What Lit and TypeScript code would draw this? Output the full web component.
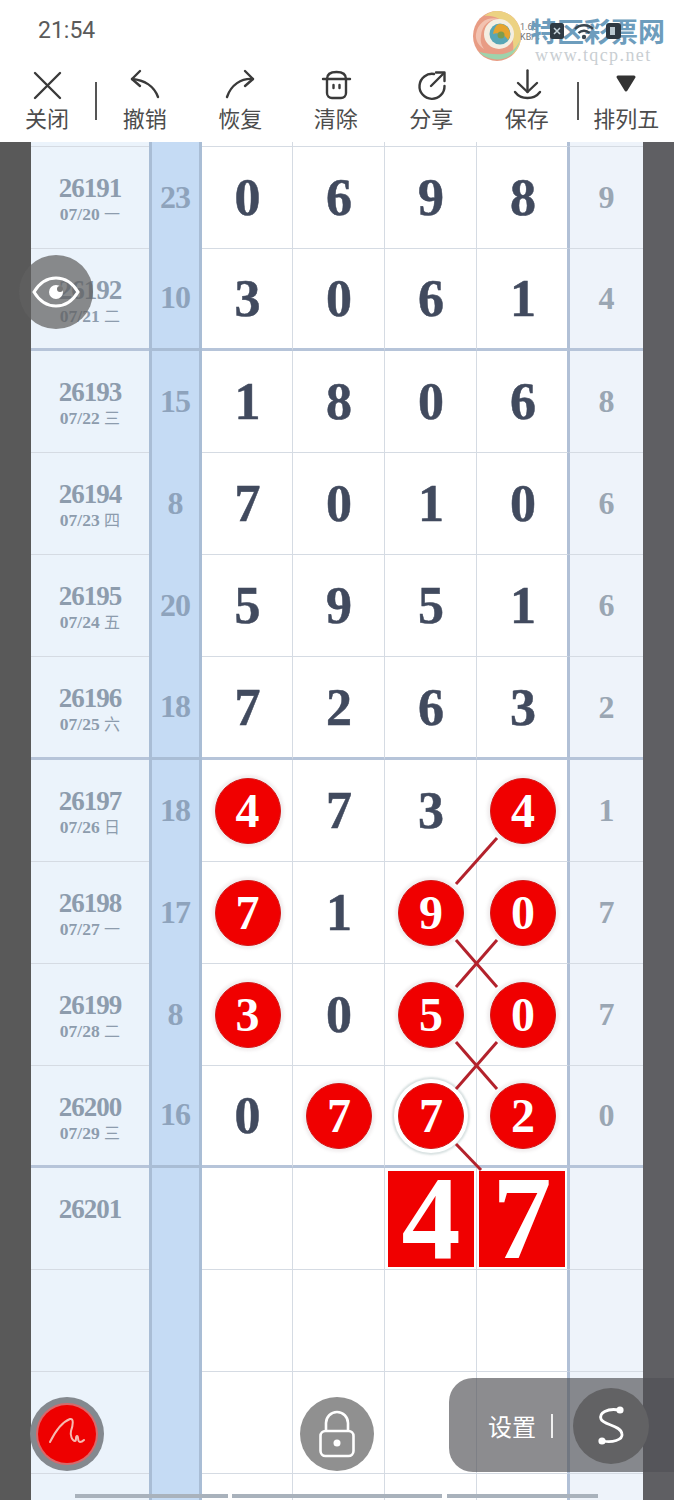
import { LitElement, html, css, svg } from "lit";
import { customElement } from "lit/decorators.js";

type Row = {
  no: string;
  date?: string;
  sum?: string;
  nums?: string[];
  hit?: number[];
  right?: string;
  thick?: boolean;
  tall?: boolean;
};

const rows: Row[] = [
  { no: "26191", date: "07/20 一", sum: "23", nums: ["0", "6", "9", "8"], right: "9" },
  { no: "26192", date: "07/21 二", sum: "10", nums: ["3", "0", "6", "1"], right: "4", thick: true },
  { no: "26193", date: "07/22 三", sum: "15", nums: ["1", "8", "0", "6"], right: "8" },
  { no: "26194", date: "07/23 四", sum: "8", nums: ["7", "0", "1", "0"], right: "6" },
  { no: "26195", date: "07/24 五", sum: "20", nums: ["5", "9", "5", "1"], right: "6" },
  { no: "26196", date: "07/25 六", sum: "18", nums: ["7", "2", "6", "3"], right: "2", thick: true, tall: true },
  { no: "26197", date: "07/26 日", sum: "18", nums: ["4", "7", "3", "4"], hit: [0, 3], right: "1" },
  { no: "26198", date: "07/27 一", sum: "17", nums: ["7", "1", "9", "0"], hit: [0, 2, 3], right: "7" },
  { no: "26199", date: "07/28 二", sum: "8", nums: ["3", "0", "5", "0"], hit: [0, 2, 3], right: "7" },
  { no: "26200", date: "07/29 三", sum: "16", nums: ["0", "7", "7", "2"], hit: [1, 2, 3], right: "0", thick: true },
];

const tools = [
  { label: "撤销", icon: svg`<path d="M11 2 3 10l8 7"/><path d="M3 10c12 1 22 7 26 18"/>` },
  { label: "恢复", icon: svg`<path d="M21 2l8 8-8 7"/><path d="M29 10C17 9 7 16 3 28"/>` },
  {
    label: "清除",
    icon: svg`<path d="M7 10v14a5 5 0 0 0 5 5h9a5 5 0 0 0 5-5V10"/><path d="M3 10h27"/><path d="M7 10C7 5 11 3 16.500 3S26 5 26 10"/><path d="M13.500 16v3M19.500 16v3"/>`,
  },
  { label: "分享", icon: svg`<path d="M19 5A12.500 12.500 0 1 0 29.500 17"/><path d="M16 17 29 4"/><path d="M21 3.500h8.500V12"/>` },
  { label: "保存", icon: svg`<path d="M16.500 1.500V23"/><path d="M7 14l9.500 9 9.500-9"/><path d="M4 23c3 4 8 6 12.500 6s9.500-2 12.500-6"/>` },
];

@customElement("app-root")
export class AppRoot extends LitElement {
  static styles = css`
    :host {
      display: block;
      position: relative;
      width: 674px;
      height: 1500px;
      overflow: hidden;
      background: #fff;
      font-family: "Noto Sans CJK SC", "Noto Sans", sans-serif;
    }

    .status {
      height: 62px;
      box-sizing: border-box;
      padding: 17px 0 0 38px;
      font-family: Roboto, sans-serif;
      font-size: 23px;
      line-height: 27px;
      color: #5a5a5a;
    }

    .toolbar {
      height: 80px;
      display: grid;
      grid-template-columns: 94px 3px repeat(5, 95.500px) 4px 1fr;
    }
    .tool {
      display: flex;
      flex-direction: column;
      align-items: center;
      padding-top: 7px;
      font-size: 22px;
      line-height: 30px;
      color: #4c4c4c;
    }
    .tool svg {
      width: 32px;
      height: 32px;
      fill: none;
      stroke: #3a3a3a;
      stroke-width: 2.400;
      stroke-linecap: round;
      stroke-linejoin: round;
      margin-bottom: 1px;
    }
    .tool svg.tri {
      fill: #333;
      stroke: #333;
      stroke-width: 3;
    }
    .divider {
      justify-self: end;
      width: 2px;
      height: 38px;
      margin-top: 20px;
      background: #555;
    }

    .sheet {
      position: relative;
      height: 1358px;
      padding: 0 31px;
      background: linear-gradient(90deg, #595959 31px, transparent 31px, transparent 643px, #5f5f63 643px);
      background-color: #fff;
    }
    .row {
      display: grid;
      grid-template-columns: 118px 53px 91px 92px 92px 92px 74px;
      height: 102px;
    }
    .row.tall {
      height: 103px;
    }
    .row.head {
      height: 5px;
    }
    .cell {
      display: flex;
      align-items: center;
      justify-content: center;
      box-sizing: border-box;
      min-width: 0;
      border-bottom: 1px solid #d5dbe3;
      border-right: 1px solid #d5dbe3;
      font-family: "Liberation Serif", serif;
      font-weight: 700;
    }
    .thick .cell {
      border-bottom: 3px solid #b6c4d9;
    }

    .date {
      flex-direction: column;
      justify-content: flex-start;
      padding-top: 26px;
      background: #ebf3fb;
      border-right: none;
      color: #8d9cad;
    }
    .date b {
      font-size: 27px;
      line-height: 30px;
      letter-spacing: -1px;
    }
    .date span {
      font-size: 17.500px;
      line-height: 20px;
    }
    .date span i {
      font-family: "Noto Sans CJK SC", sans-serif;
      font-style: normal;
      font-weight: 400;
      font-size: 16px;
    }

    .sum {
      background: #c5dbf4;
      border-left: 3px solid #a9bdd5;
      border-right: 3px solid #a9bdd5;
      border-bottom: none;
      padding: 0 1px 2px 0;
      font-size: 32px;
      letter-spacing: -1px;
      color: #8ea3bc;
    }
    .thick .sum {
      border-bottom: 3px solid #a9bdd5;
    }

    .num {
      padding-left: 1px;
      font-size: 52px;
      -webkit-text-stroke: 0.500px #414a5e;
      color: #414a5e;
    }
    .num.last {
      padding-left: 2px;
      border-right: 2px solid #b1c0d6;
    }
    .ball {
      display: flex;
      align-items: center;
      justify-content: center;
      width: 66px;
      height: 66px;
      box-sizing: border-box;
      border-radius: 50%;
      background: #f00000;
      border: 1px solid #d21a1a;
      box-shadow: 0 0 3px 3px rgba(232, 226, 228, 0.6);
      font-size: 48px;
      -webkit-text-stroke: 0;
      color: #fff;
    }
    .ball.ring {
      box-shadow: 0 0 0 4px #fff, 0 0 2px 6px rgba(190, 205, 205, 0.6);
    }
    .hit-box {
      display: flex;
      align-items: center;
      justify-content: center;
      width: 86px;
      height: 96px;
      background: #f00000;
      font-size: 118px;
      line-height: 96px;
      -webkit-text-stroke: 0;
      color: #fff;
    }
    .last .hit-box {
      margin-left: -2px;
    }

    .side {
      background: #eef3fa;
      border-left: 1px solid #b1c0d6;
      border-right: none;
      font-size: 32px;
      color: #9aa6b3;
    }

    .links {
      position: absolute;
      left: 0;
      top: 0;
      pointer-events: none;
    }
    .links line {
      stroke: #b3222c;
      stroke-width: 3;
    }

    .scroll {
      position: absolute;
      top: 1494px;
      height: 4px;
      background: #a9b2bc;
    }

    .logo {
      position: absolute;
      left: 470px;
      top: 8px;
      width: 204px;
      height: 56px;
    }
    .logo svg {
      position: absolute;
      left: 2px;
      top: 2px;
    }
    .logo .cn {
      position: absolute;
      left: 60px;
      top: 9px;
      font-size: 27px;
      line-height: 27px;
      font-weight: 700;
      color: #6d9dbd;
      white-space: nowrap;
    }
    .logo .url {
      position: absolute;
      left: 65px;
      top: 37px;
      font-family: "Liberation Serif", serif;
      font-size: 18px;
      line-height: 20px;
      letter-spacing: 1.400px;
      color: #c9ced2;
      white-space: nowrap;
    }
    .logo .speed {
      position: absolute;
      left: 50px;
      top: 14px;
      font-family: Roboto, sans-serif;
      font-size: 9px;
      line-height: 10px;
      color: #777;
    }
    .sys {
      position: absolute;
      left: 548px;
      top: 20px;
    }

    .round {
      position: absolute;
      display: flex;
      align-items: center;
      justify-content: center;
      width: 74px;
      height: 74px;
      border-radius: 50%;
    }
    .eye {
      left: 19px;
      top: 255px;
      background: rgba(95, 95, 95, 0.72);
    }
    .pen {
      left: 30px;
      top: 1397px;
      background: #84898f;
    }
    .pen-in {
      display: flex;
      align-items: center;
      justify-content: center;
      width: 58px;
      height: 58px;
      border-radius: 50%;
      background: #ee0000;
      box-shadow: 0 0 0 2px #d9686a;
    }
    .lock {
      left: 300px;
      top: 1397px;
      background: #909090;
    }
    .panel {
      position: absolute;
      left: 449px;
      top: 1378px;
      width: 225px;
      height: 94px;
      box-sizing: border-box;
      padding-left: 39px;
      display: flex;
      align-items: center;
      gap: 15px;
      border-radius: 24px 0 0 24px;
      background: rgba(80, 80, 85, 0.66);
      font-size: 24px;
      color: #fff;
    }
    .panel i {
      width: 2px;
      height: 24px;
      background: #f0f0f0;
      margin-top: 1px;
    }
    .share {
      left: 573px;
      top: 1388px;
      width: 76px;
      height: 76px;
      background: #626264;
    }
  `;

  private renderNum(row: Row, i: number, n: string) {
    const hit = row.hit?.includes(i);
    // the 7 in 26200 third column has the heavier ring
    const ring = row.no === "26200" && i === 2;
    return html`<div class="cell num ${i === 3 ? "last" : ""}">
      ${hit ? html`<div class="ball ${ring ? "ring" : ""}">${n}</div>` : n}
    </div>`;
  }

  private renderRow(row: Row) {
    const [day, week] = (row.date ?? "").split(" ");
    return html`<div class="row ${row.thick ? "thick" : ""} ${row.tall ? "tall" : ""}">
      <div class="cell date">
        <b>${row.no}</b>
        ${row.date ? html`<span>${day} <i>${week}</i></span>` : ""}
      </div>
      <div class="cell sum">${row.sum}</div>
      ${row.nums?.map((n, i) => this.renderNum(row, i, n))}
      <div class="cell side">${row.right}</div>
    </div>`;
  }

  private renderEmptyRow(no: string, boxes: string[] = []) {
    return html`<div class="row">
      <div class="cell date"><b>${no}</b></div>
      <div class="cell sum"></div>
      <div class="cell num"></div>
      <div class="cell num"></div>
      <div class="cell num">${boxes[0] ? html`<div class="hit-box">${boxes[0]}</div>` : ""}</div>
      <div class="cell num last">${boxes[1] ? html`<div class="hit-box">${boxes[1]}</div>` : ""}</div>
      <div class="cell side"></div>
    </div>`;
  }

  private renderLinks() {
    const segs = [
      [497, 838, 456, 884],
      [456, 940, 497, 987],
      [497, 940, 456, 987],
      [456, 1042, 497, 1089],
      [497, 1042, 456, 1089],
      [456, 1144, 481, 1170],
    ];
    // viewBox starts at the sheet's top, so the points above are page coordinates
    return html`<svg class="links" width="674" height="1358" viewBox="0 142 674 1358">
      ${segs.map((s) => svg`<line x1=${s[0]} y1=${s[1]} x2=${s[2]} y2=${s[3]} />`)}
    </svg>`;
  }

  private renderLogo() {
    return html`<div class="logo">
      <svg width="50" height="52" viewBox="0 0 50 52">
        <ellipse cx="25" cy="26" rx="24" ry="25" fill="#e89c84" />
        <path d="M25 1c13 0 24 11 24 25 0 8-3 14-9 19 3-8 1-22-6-30C29 9 22 5 12 6c4-3 8-5 13-5z" fill="#ecd282" />
        <path d="M7 42c6 7 22 11 32 3 5-4 8-10 9-15-3 8-9 13-17 14-9 1-18-1-24-2z" fill="#9fd3ac" />
        <path d="M4 24C6 12 16 6 27 9 17 9 10 15 9 26c-1 6 1 10 3 13-5-3-9-9-8-15z" fill="#f2c2b0" />
        <circle cx="27" cy="24" r="15" fill="#f4eee2" />
        <circle cx="28" cy="24" r="10.500" fill="#58a6b6" />
        <path d="M28 14a10 10 0 0 1 8 16c-3-5-9-8-15-6 1-5 3-10 7-10z" fill="#e6a32e" />
        <circle cx="29" cy="25" r="3.500" fill="#7f9c4b" />
      </svg>
      <span class="speed">1.60<br />KB/s</span>
      <span class="cn">特区彩票网</span>
      <span class="url">www.tqcp.net</span>
    </div>
    <svg class="sys" width="80" height="22" viewBox="0 0 80 22">
      <rect x="2" y="3" width="14" height="16" rx="2.500" fill="#2f3a44" />
      <path d="M6 8l6 6M12 8l-6 6" stroke="#c6d4dc" stroke-width="1.500" />
      <path d="M27 9c5-5 13-5 18 0M30.500 13c3-3 8-3 11 0" fill="none" stroke="#3a4650" stroke-width="2.400" />
      <circle cx="36" cy="17" r="2.200" fill="#3a4650" />
      <rect x="58" y="3" width="15" height="16" rx="3" fill="#2f3842" />
      <rect x="62" y="7" width="5" height="8" fill="#b9c6cf" />
    </svg>`;
  }

  render() {
    return html`
      <div class="status">21:54</div>
      <div class="toolbar">
        <div class="tool">
          <svg viewBox="0 0 32 32"><path d="M4 4l25 25M29 4 4 29" /></svg>关闭
        </div>
        <div class="divider"></div>
        ${tools.map((t) => html`<div class="tool"><svg viewBox="0 0 32 32">${t.icon}</svg>${t.label}</div>`)}
        <div class="divider"></div>
        <div class="tool">
          <svg class="tri" viewBox="0 0 32 32"><path d="M8 8h16L16 21z" /></svg>排列五
        </div>
      </div>
      <div class="sheet">
        <div class="row head">
          <div class="cell date" style="padding:0"></div>
          <div class="cell sum"></div>
          <div class="cell"></div>
          <div class="cell"></div>
          <div class="cell"></div>
          <div class="cell num last"></div>
          <div class="cell side"></div>
        </div>
        ${rows.map((r) => this.renderRow(r))}
        ${this.renderEmptyRow("26201", ["4", "7"])}
        ${this.renderEmptyRow("")}
        ${this.renderEmptyRow("")}
        ${this.renderEmptyRow("")}
        ${this.renderLinks()}
      </div>

      ${this.renderLogo()}

      <div class="scroll" style="left:75px;width:153px"></div>
      <div class="scroll" style="left:232px;width:210px"></div>
      <div class="scroll" style="left:447px;width:151px"></div>

      <div class="round eye">
        <svg width="48" height="34" viewBox="0 0 48 34" fill="none" stroke="#fff" stroke-width="3">
          <path d="M2 17C8 7 15 3 24 3s16 4 22 14c-6 10-13 14-22 14S8 27 2 17z" />
          <circle cx="24" cy="17" r="7" fill="#fff" stroke="none" />
          <circle cx="28" cy="14" r="3" fill="#777" stroke="none" />
        </svg>
      </div>

      <div class="round pen">
        <div class="pen-in">
          <svg width="40" height="40" viewBox="0 0 40 40" fill="none" stroke="#f6b9b0" stroke-width="2" stroke-linecap="round">
            <path d="M3 28C8 18 15 8 23 5c4-1 3 6 1 12-1 4 1 10 4 10 2 0 0-5 2-5 2 0 0 6 3 6 2 0 3-1 4-2" />
          </svg>
        </div>
      </div>

      <div class="round lock">
        <svg width="40" height="52" viewBox="0 0 40 52" fill="none" stroke="#fff" stroke-width="2.600">
          <path d="M9 24v-9a11 11 0 0 1 22 0v9" />
          <rect x="3.500" y="23" width="33" height="25" rx="5" />
          <circle cx="20" cy="35" r="3.500" fill="#fff" stroke="none" />
        </svg>
      </div>

      <div class="panel">设置<i></i></div>
      <div class="round share">
        <svg width="36" height="44" viewBox="0 0 36 44" fill="none" stroke="#fff" stroke-width="2.800" stroke-linecap="round">
          <path d="M26 6C14 4 6 9 8 15c2 6 20 6 21 15 1 6-10 9-19 7" />
          <circle cx="27" cy="6" r="3.600" fill="#fff" stroke="none" />
          <circle cx="9" cy="37" r="3.600" fill="#fff" stroke="none" />
        </svg>
      </div>
    `;
  }
}
